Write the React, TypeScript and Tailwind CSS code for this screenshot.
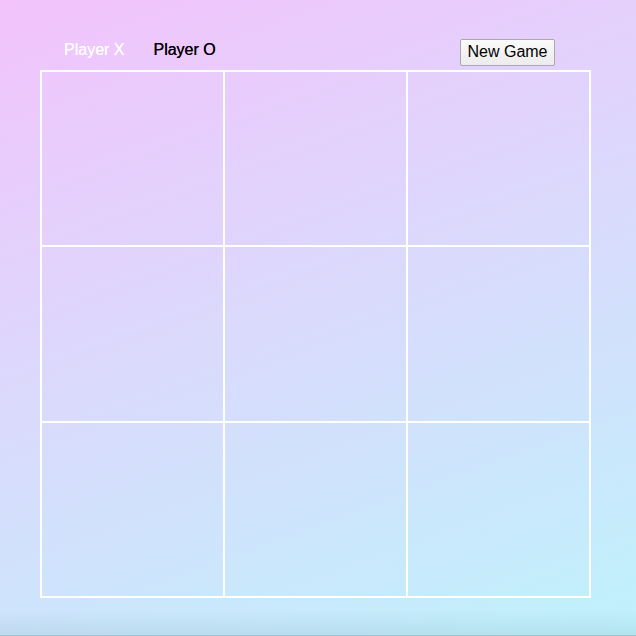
import React from "react";

export default function App() {
  const cells = Array.from({ length: 9 });
  return (
    <div
      className="relative w-[636px] h-[636px] overflow-hidden bg-[linear-gradient(160deg,#f3c3fc,#bff2fc)]"
      style={{ fontFamily: '"Liberation Sans", Arial, sans-serif' }}
    >
      <div className="pt-[39px] pl-[40px] w-[591px]">
        <div className="flex items-start justify-between h-[27px] mb-[4px]">
          <div className="flex pl-[24px] pt-[2px] gap-[29px] text-[16px] leading-[18px]">
            <span className="text-white [text-shadow:0_0_0.4px_#fff]">Player X</span>
            <span className="text-black [text-shadow:0_0_0.4px_#000]">Player O</span>
          </div>
          <button className="mr-[36px] w-[95px] h-[27px] border border-[#a9a9a9] rounded-[2px] bg-[linear-gradient(#fafafa,#ececec)] text-[16px] leading-[18px] pt-[3px] pb-[4px] text-black">
            New Game
          </button>
        </div>
        <div className="grid grid-cols-3 grid-rows-3 w-[551px] h-[528px] border border-white">
          {cells.map((_, i) => (
            <div key={i} className="border border-white" />
          ))}
        </div>
      </div>
      <div className="absolute left-0 right-0 bottom-0 h-[26px] bg-[linear-gradient(rgba(0,40,60,0),rgba(0,40,60,0.07))] border-b border-[#9fc6d2]" />
    </div>
  );
}
